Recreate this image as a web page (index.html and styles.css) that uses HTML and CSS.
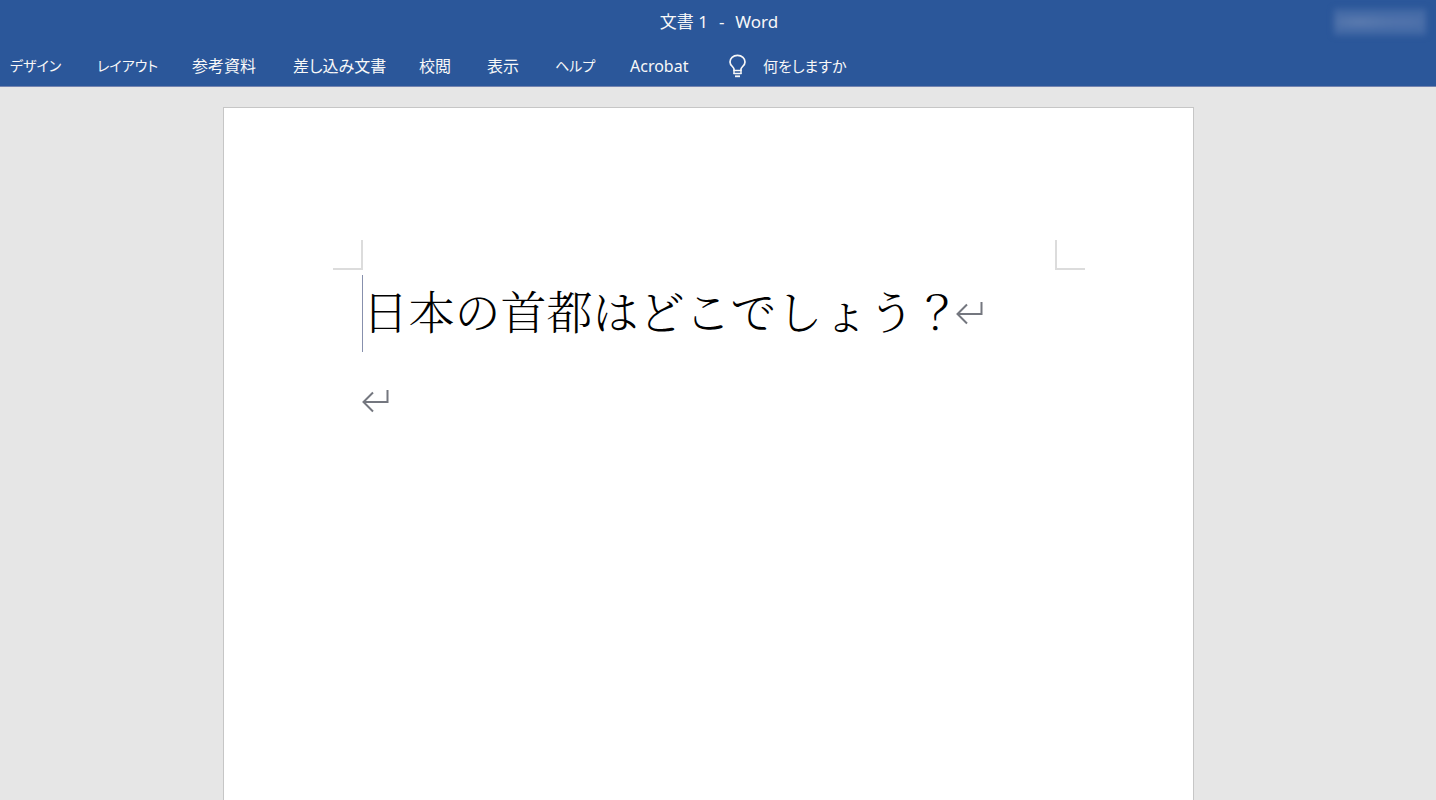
FILE: index.html
```html
<!DOCTYPE html>
<html lang="ja">
<head>
<meta charset="utf-8">
<meta name="viewport" content="width=device-width, initial-scale=1">
<title>文書 1 - Word</title>
<link rel="stylesheet" href="styles.css">
</head>
<body>
<header class="app-header">
  <div class="title-bar">
    <div class="title"><span>文書 1</span><span>-</span><span>Word</span></div>
    <span class="account"></span>
  </div>
  <nav class="ribbon-tabs">
    <button type="button" class="tab tab-kana">デザイン</button>
    <button type="button" class="tab tab-kana">レイアウト</button>
    <button type="button" class="tab">参考資料</button>
    <button type="button" class="tab">差し込み文書</button>
    <button type="button" class="tab">校閲</button>
    <button type="button" class="tab">表示</button>
    <button type="button" class="tab tab-kana">ヘルプ</button>
    <button type="button" class="tab">Acrobat</button>
    <button type="button" class="tab tell-me">
      <svg class="bulb" width="20" height="24" viewBox="0 0 20 24" fill="none" stroke="currentColor" aria-hidden="true">
        <path d="M7 16.500V15C6.800 12.700 3 11.800 3 8C3 4.300 6 1.300 10.500 1.300S18 4.300 18 8C18 11.800 14.200 12.700 14 15V16.500" stroke-width="1.700"/>
        <path d="M6.500 16.500H14.500M6.500 19.500H14.500" stroke-width="1.500"/>
        <path d="M7 16V20M14 16V20" stroke-width="1.400"/>
        <path d="M8 22.300H13" stroke-width="1.800"/>
      </svg>
      <span>何をしますか</span>
    </button>
  </nav>
</header>
<main class="workspace">
  <article class="page">
    <div class="margin-marks">
      <span class="mark mark-left"></span>
      <span class="mark mark-right"></span>
    </div>
    <div class="body-text">
      <p class="line line-active">
        <span class="text">日本の首都はどこでしょう？</span>
        <svg class="return" width="28" height="26" viewBox="0 0 28 26" fill="none" stroke="#74777f" stroke-width="2" aria-hidden="true"><path d="M25.500 2V14H2M11 4.500L1.500 14L11 23.500"/></svg>
      </p>
      <p class="line">
        <svg class="return" width="28" height="26" viewBox="0 0 28 26" fill="none" stroke="#74777f" stroke-width="2" aria-hidden="true"><path d="M25.500 2V14H2M11 4.500L1.500 14L11 23.500"/></svg>
      </p>
    </div>
  </article>
</main>
</body>
</html>
```

FILE: styles.css
```css
* {
  box-sizing: border-box;
}

body {
  margin: 0;
  min-height: 100vh;
  display: flex;
  flex-direction: column;
  background: #e6e6e6;
  font-family: "Noto Sans", "Noto Sans CJK JP", sans-serif;
  font-size: 16px;
}

.app-header {
  background: #2b579a;
  border-bottom: 1px solid #7484b0;
  color: #f8f8f8;
}

.title-bar {
  display: grid;
  grid-template-columns: 1fr auto 1fr;
  align-items: center;
  height: 44px;
  padding: 0 10px 0 12px;
}

.title {
  grid-column: 2;
  display: flex;
  gap: 11px;
  font-size: 17px;
  line-height: 24px;
}

.account {
  justify-self: end;
  width: 92px;
  height: 26px;
  background: radial-gradient(ellipse at 28% 50%, #5e7db0, transparent 45%),
    radial-gradient(ellipse at 76% 50%, #5475ad, transparent 40%), #446aa6;
  filter: blur(3px);
}

.ribbon-tabs {
  display: grid;
  grid-template-columns: 87px 95px 101px 126px 68px 68px 75px 97px auto;
  justify-content: start;
  height: 42px;
  padding: 2px 0 0 10px;
}

.tab {
  padding: 0;
  border: 0;
  background: none;
  color: inherit;
  font: inherit;
  font-feature-settings: "palt";
  line-height: 24px;
  text-align: left;
  white-space: nowrap;
}

.tab-kana {
  font-size: 14px;
}

.tell-me {
  display: flex;
  align-items: center;
  gap: 16px;
  font-size: 15px;
}

.workspace {
  flex: 1;
  display: flex;
  justify-content: center;
  padding: 20px 20px 0 0;
}

.page {
  width: 971px;
  max-width: 100%;
  padding: 132px 108px 0 109px;
  background: #fff;
  border: 1px solid #c6c6c6;
  border-bottom: 0;
}

.margin-marks {
  display: flex;
  justify-content: space-between;
}

.mark {
  width: 30px;
  height: 30px;
  border-bottom: 2px solid #dcdcdc;
}

.mark-left {
  border-right: 2px solid #dcdcdc;
}

.mark-right {
  border-left: 2px solid #dcdcdc;
}

.body-text {
  padding: 5px 0 0 29px;
}

.line {
  display: flex;
  align-items: flex-start;
  margin: 0;
  height: 77px;
  color: #000;
  font-family: "Noto Serif CJK JP", "Noto Sans CJK JP", serif;
  font-size: 46px;
  font-weight: 300;
  line-height: 68px;
  white-space: nowrap;
}

.line + .line {
  margin-top: 11px;
}

.line-active {
  border-left: 1px solid #8790ad;
}

.return {
  margin-top: 25px;
}

.text + .return {
  margin-left: -5px;
}
```
